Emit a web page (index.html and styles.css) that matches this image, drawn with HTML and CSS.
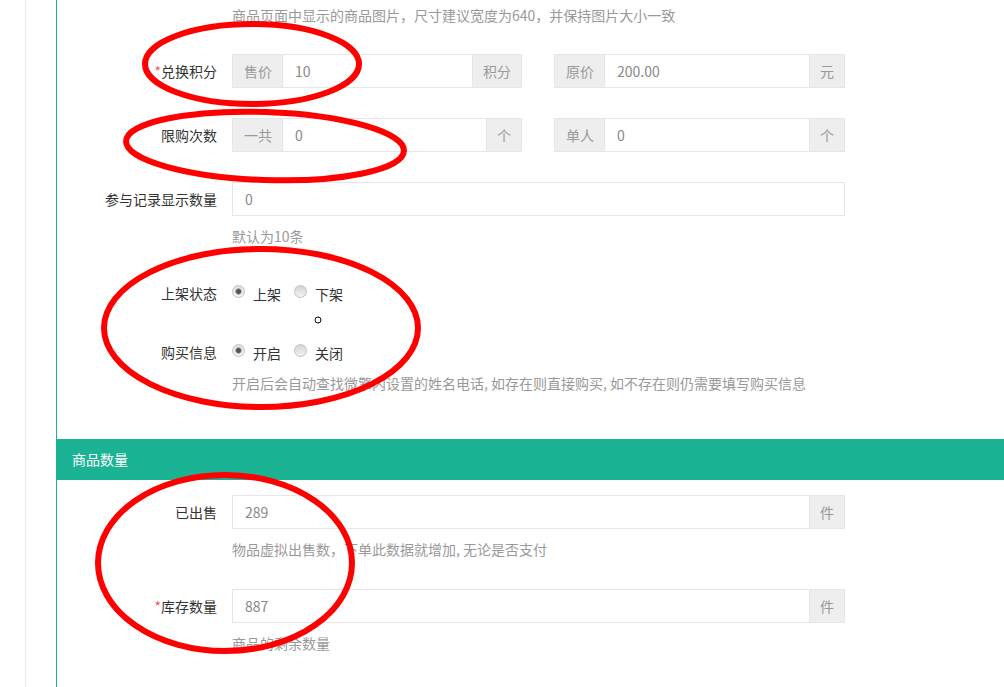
FILE: index.html
```html
<!DOCTYPE html>
<html lang="zh-CN">
<head>
  <meta charset="UTF-8" />
  <meta name="viewport" content="width=device-width, initial-scale=1.0"/>
  <title>商品编辑</title>
  <link rel="stylesheet" href="styles.css">
</head>
<body>
  <div class="page">
    <div class="rail">
      <div class="panel">
        <div class="panel-body">
          <p class="help top-help">商品页面中显示的商品图片，尺寸建议宽度为640，并保持图片大小一致</p>

          <div class="form-group">
            <label class="control-label"><span class="req">*</span>兑换积分</label>
            <div class="controls split">
              <div class="input-group">
                <span class="addon">售价</span>
                <input class="form-control" type="text" value="10" />
                <span class="addon">积分</span>
              </div>
              <div class="input-group">
                <span class="addon">原价</span>
                <input class="form-control" type="text" value="200.00" />
                <span class="addon">元</span>
              </div>
            </div>
          </div>

          <div class="form-group">
            <label class="control-label">限购次数</label>
            <div class="controls split">
              <div class="input-group">
                <span class="addon">一共</span>
                <input class="form-control" type="text" value="0" />
                <span class="addon">个</span>
              </div>
              <div class="input-group">
                <span class="addon">单人</span>
                <input class="form-control" type="text" value="0" />
                <span class="addon">个</span>
              </div>
            </div>
          </div>

          <div class="form-group">
            <label class="control-label">参与记录显示数量</label>
            <div class="controls">
              <div class="input-group">
                <input class="form-control" type="text" value="0" />
              </div>
              <p class="help">默认为10条</p>
            </div>
          </div>

          <div class="form-group radio-group tight">
            <label class="control-label">上架状态</label>
            <div class="controls">
              <div class="radio-list">
                <label class="radio"><input type="radio" name="status" checked /><span>上架</span></label>
                <label class="radio"><input type="radio" name="status" /><span>下架</span></label>
              </div>
            </div>
          </div>

          <div class="form-group radio-group">
            <label class="control-label">购买信息</label>
            <div class="controls">
              <div class="radio-list">
                <label class="radio"><input type="radio" name="buyinfo" checked /><span>开启</span></label>
                <label class="radio"><input type="radio" name="buyinfo" /><span>关闭</span></label>
              </div>
              <p class="help near">开启后会自动查找微擎内设置的姓名电话, 如存在则直接购买, 如不存在则仍需要填写购买信息</p>
            </div>
          </div>
        </div>

        <div class="panel-heading">商品数量</div>

        <div class="panel-body">
          <div class="form-group">
            <label class="control-label">已出售</label>
            <div class="controls">
              <div class="input-group">
                <input class="form-control" type="text" value="289" />
                <span class="addon">件</span>
              </div>
              <p class="help">物品虚拟出售数，下单此数据就增加, 无论是否支付</p>
            </div>
          </div>

          <div class="form-group">
            <label class="control-label"><span class="req">*</span>库存数量</label>
            <div class="controls">
              <div class="input-group">
                <input class="form-control" type="text" value="887" />
                <span class="addon">件</span>
              </div>
              <p class="help">商品的剩余数量</p>
            </div>
          </div>
        </div>
      </div>
    </div>

    <!-- hand-drawn marks on top of the form -->
    <svg class="marks" width="1004" height="687" viewBox="0 0 1004 687">
      <g fill="none" stroke="#ff0000" stroke-width="6">
        <ellipse cx="252" cy="64" rx="107" ry="40" />
        <ellipse cx="265" cy="146" rx="139" ry="34" transform="rotate(2 265 146)" />
        <ellipse cx="261" cy="328" rx="157" ry="79" />
        <ellipse cx="225" cy="563" rx="127" ry="88" />
      </g>
      <circle cx="318" cy="320" r="3" fill="#fff" stroke="#000" stroke-width="1" />
    </svg>
  </div>
</body>
</html>
```

FILE: styles.css
```css
html, body {
  margin: 0;
  height: 100%;
}

body {
  font-family: "Noto Sans CJK SC", "Microsoft YaHei", sans-serif;
  font-size: 14px;
  color: #333;
  background: #fff;
}

.page {
  position: relative;
  min-height: 100%;
  padding-left: 25px;
  overflow: hidden;
}

.rail {
  border-left: 1px solid #e7eaec;
  padding-left: 30px;
  min-height: 100vh;
}

.panel {
  border-left: 1px solid #1ab394;
  min-height: 100vh;
}

.panel-body {
  padding-top: 15px;
  padding-bottom: 15px;
}

.panel-body:first-child {
  padding-top: 5px;
  padding-bottom: 16px;
}

.panel-heading {
  background: #1ab394;
  color: #fff;
  height: 41px;
  line-height: 41px;
  padding-left: 15px;
}

.help {
  margin: 10px 0 0;
  line-height: 20px;
  color: #999;
}

.help.near {
  margin-top: 4px;
}

.top-help {
  margin: 0 0 29px 175px;
}

.form-group {
  display: flex;
  margin-bottom: 30px;
}

.form-group.tight {
  margin-bottom: 25px;
}

.control-label {
  width: 160px;
  flex-shrink: 0;
  text-align: right;
  line-height: 34px;
}

.req {
  color: #ed5565;
}

.controls {
  margin-left: 15px;
  width: 613px;
}

.controls.split {
  display: grid;
  grid-template-columns: 290px 291px;
  column-gap: 32px;
}

.input-group {
  display: flex;
  height: 34px;
}

.addon {
  background: #eee;
  border: 1px solid #e5e6e7;
  color: #999;
  padding: 0 10px;
  line-height: 32px;
  white-space: nowrap;
}

.addon:first-child {
  border-right: 0;
  padding-left: 11px;
}

.addon:last-child {
  border-left: 0;
}

.form-control {
  flex: 1;
  min-width: 0;
  box-sizing: border-box;
  height: 34px;
  margin: 0;
  padding: 0 12px;
  border: 1px solid #e5e6e7;
  font-family: inherit;
  font-size: 14px;
  color: #888;
  outline: none;
}

.radio-list {
  display: flex;
  gap: 13px;
  height: 34px;
}

.radio {
  display: flex;
  align-items: center;
}

.radio input {
  appearance: none;
  -webkit-appearance: none;
  width: 13px;
  height: 13px;
  margin: 0 8px 0 0;
  border: 1px solid #c2c2c2;
  border-radius: 50%;
  background: linear-gradient(#d4d4d4, #f2f2f2);
  box-sizing: border-box;
  position: relative;
  top: -2px;
}

.radio input:checked {
  background: radial-gradient(circle, #4a4a4a 0, #5a5a5a 2px, #aaa 3px, transparent 3.5px), linear-gradient(#dedede, #f6f6f6);
}

.radio span {
  line-height: 34px;
  position: relative;
  top: 1px;
}

.marks {
  position: absolute;
  left: 0;
  top: 0;
  pointer-events: none;
}
```
